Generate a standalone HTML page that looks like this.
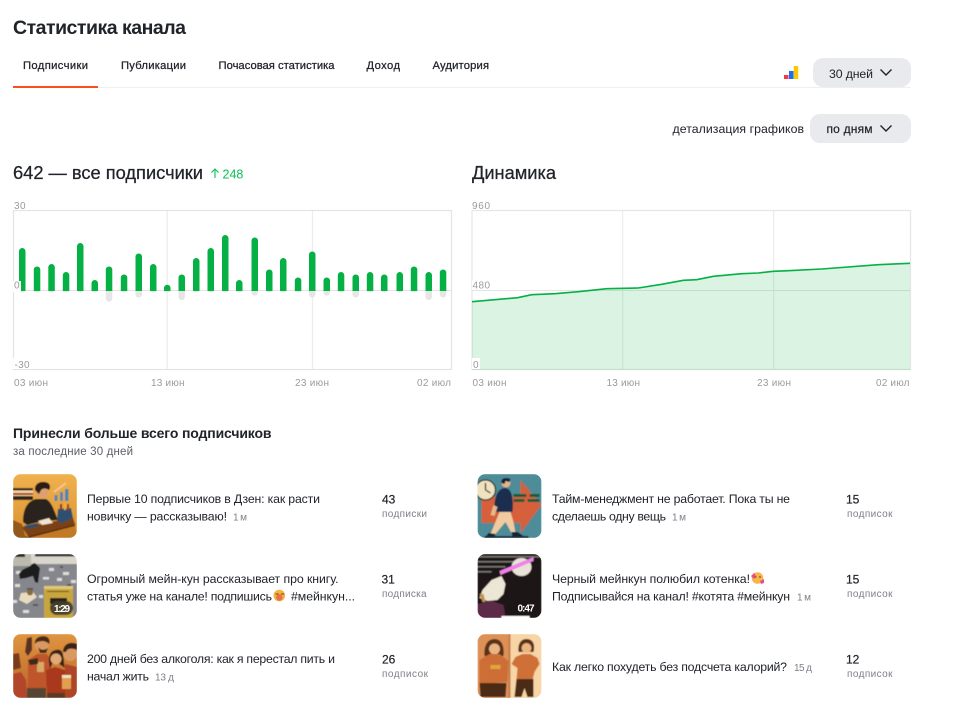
<!DOCTYPE html>
<html lang="ru">
<head>
<meta charset="utf-8">
<title>Статистика канала</title>
<style>
html,body{margin:0;padding:0;background:#fff;width:957px;height:716px;overflow:hidden}
svg{display:block;font-family:"Liberation Sans","Noto Sans CJK SC",sans-serif}
.d{fill:#20232a}
.g{fill:#9b9b9b;font-size:10px}
.s{fill:#7d8088;font-size:10px}
.m{stroke:#20232a;stroke-width:.25}
.t{font-size:12.3px;fill:#20232a}
.n{font-size:12px;fill:#20232a;stroke:#20232a;stroke-width:.2}
</style>
</head>
<body>
<svg width="957" height="716" viewBox="0 0 957 716" xmlns="http://www.w3.org/2000/svg">
<defs><clipPath id="c"><rect width="64" height="64" rx="8"/></clipPath>
<filter id="b" x="-5%" y="-5%" width="110%" height="110%"><feGaussianBlur stdDeviation=".4"/></filter>
<linearGradient id="o1" x1="0" y1="0" x2="0" y2="1"><stop offset="0" stop-color="#f0b14e"/><stop offset="1" stop-color="#d9922e"/></linearGradient>
<linearGradient id="o3" x1="0" y1="0" x2="0" y2="1"><stop offset="0" stop-color="#e0953f"/><stop offset="1" stop-color="#b8642a"/></linearGradient>
</defs>

<text class="d" x="13" y="34" font-size="19.500" font-weight="700" textLength="173">Статистика канала</text>

<g font-size="11.200" class="d">
<text class="d m" x="23" y="69" textLength="65">Подписчики</text>
<text class="d m" x="121" y="69" textLength="65">Публикации</text>
<text class="d m" x="218.500" y="69" textLength="116">Почасовая статистика</text>
<text class="d m" x="366.500" y="69" textLength="33.500">Доход</text>
<text class="d m" x="432.500" y="69" textLength="56.500">Аудитория</text>
</g>
<rect x="13" y="87" width="898" height="1" fill="#efefef"/>
<rect x="13" y="86" width="85" height="2" fill="#fc4d1c"/>

<rect x="784" y="75" width="4.500" height="4" fill="#f33b45"/>
<rect x="789" y="71" width="4.500" height="8" fill="#1e6ff0"/>
<rect x="793.700" y="66" width="4.500" height="13" fill="#fdc800"/>

<rect x="813" y="58" width="98" height="29" rx="10" fill="#e9eaee"/>
<text class="t" x="829" y="78" textLength="44">30 дней</text>
<path d="M880.500 69.500l5.500 5.500 5.500-5.500" fill="none" stroke="#20232a" stroke-width="1.400"/>

<text class="t" x="672.500" y="133" textLength="131.500">детализация графиков</text>
<rect x="810" y="114" width="101" height="29" rx="10" fill="#e9eaee"/>
<text class="n" x="826.500" y="133" textLength="46">по дням</text>
<path d="M880.500 125.500l5.500 5.500 5.500-5.500" fill="none" stroke="#20232a" stroke-width="1.400"/>

<text class="d m" x="13" y="179" font-size="18.300" textLength="190">642 — все подписчики</text>
<path d="M215 178v-9M211.500 172.500l3.500-3.500 3.500 3.500" fill="none" stroke="#0bbf54" stroke-width="1.100"/>
<text x="222.500" y="178.500" font-size="12.500" fill="#0bbf54">248</text>
<text class="d m" x="472" y="179" font-size="18.300" textLength="84">Динамика</text>

<!-- left chart -->
<g>
<rect x="13.500" y="210.500" width="438" height="159" fill="#fff" stroke="#e4e4e4" stroke-width="1.200"/>
<rect x="166.500" y="211" width="1.300" height="158" fill="#ededed"/>
<rect x="311.800" y="211" width="1.300" height="158" fill="#ededed"/>
<g fill="#e6e6e6">
<rect x="19" y="286" width="6.500" height="6.500" rx="3"/><rect x="33.800" y="286" width="6.500" height="6.500" rx="3"/><rect x="48.300" y="286" width="6.500" height="6.500" rx="3"/><rect x="62.800" y="286" width="6.500" height="6.500" rx="3"/><rect x="77" y="286" width="6.500" height="6.500" rx="3"/><rect x="91.500" y="286" width="6.500" height="6.500" rx="3"/>
<rect x="105.800" y="286" width="6.500" height="15.700" rx="3.200"/>
<rect x="120.800" y="286" width="6.500" height="6.500" rx="3"/>
<rect x="135.500" y="286" width="6.500" height="11.500" rx="3.200"/>
<rect x="150" y="286" width="6.500" height="6.500" rx="3"/><rect x="164" y="286" width="6.500" height="6.500" rx="3"/>
<rect x="178.500" y="286" width="6.500" height="14" rx="3.200"/>
<rect x="193" y="286" width="6.500" height="6.500" rx="3"/><rect x="207.500" y="286" width="6.500" height="6.500" rx="3"/><rect x="222" y="286" width="6.500" height="6.500" rx="3"/><rect x="236" y="286" width="6.500" height="6.500" rx="3"/>
<rect x="251.500" y="286" width="6.500" height="9.700" rx="3.200"/>
<rect x="266" y="286" width="6.500" height="6.500" rx="3"/><rect x="280" y="286" width="6.500" height="6.500" rx="3"/><rect x="294.800" y="286" width="6.500" height="6.500" rx="3"/>
<rect x="309" y="286" width="6.500" height="11.500" rx="3.200"/>
<rect x="323.500" y="286" width="6.500" height="9.700" rx="3.200"/>
<rect x="337.800" y="286" width="6.500" height="6.500" rx="3"/>
<rect x="352.500" y="286" width="6.500" height="11.500" rx="3.200"/>
<rect x="366.800" y="286" width="6.500" height="6.500" rx="3"/><rect x="381" y="286" width="6.500" height="6.500" rx="3"/><rect x="396.500" y="286" width="6.500" height="6.500" rx="3"/><rect x="410.800" y="286" width="6.500" height="6.500" rx="3"/>
<rect x="425.500" y="286" width="6.500" height="14" rx="3.200"/>
<rect x="439.800" y="286" width="6.500" height="11.500" rx="3.200"/>
</g>
<rect x="14" y="290" width="437" height="1" fill="#e4e4e4"/>
<g fill="#05b044">
<path d="M19 291v-39.700a3.250 3.250 0 0 1 6.500 0V291z"/>
<path d="M33.800 291v-21.300a3.250 3.250 0 0 1 6.500 0V291z"/>
<path d="M48.300 291v-23.700a3.250 3.250 0 0 1 6.500 0V291z"/>
<path d="M62.800 291v-15.700a3.250 3.250 0 0 1 6.500 0V291z"/>
<path d="M77 291v-44.700a3.250 3.250 0 0 1 6.500 0V291z"/>
<path d="M91.500 291v-7.700a3.250 3.250 0 0 1 6.500 0V291z"/>
<path d="M105.800 291v-21.300a3.250 3.250 0 0 1 6.500 0V291z"/>
<path d="M120.800 291v-13.300a3.250 3.250 0 0 1 6.500 0V291z"/>
<path d="M135.500 291v-34.300a3.250 3.250 0 0 1 6.500 0V291z"/>
<path d="M150 291v-23.700a3.250 3.250 0 0 1 6.500 0V291z"/>
<path d="M164 291v-3a3.250 3.250 0 0 1 6.500 0V291z"/>
<path d="M178.500 291v-13.300a3.250 3.250 0 0 1 6.500 0V291z"/>
<path d="M193 291v-29.700a3.250 3.250 0 0 1 6.500 0V291z"/>
<path d="M207.500 291v-39.700a3.250 3.250 0 0 1 6.500 0V291z"/>
<path d="M222 291v-52.700a3.250 3.250 0 0 1 6.500 0V291z"/>
<path d="M236 291v-7.700a3.250 3.250 0 0 1 6.500 0V291z"/>
<path d="M251.500 291v-50.300a3.250 3.250 0 0 1 6.500 0V291z"/>
<path d="M266 291v-18.300a3.250 3.250 0 0 1 6.500 0V291z"/>
<path d="M280 291v-29.700a3.250 3.250 0 0 1 6.500 0V291z"/>
<path d="M294.800 291v-10.300a3.250 3.250 0 0 1 6.500 0V291z"/>
<path d="M309 291v-36.300a3.250 3.250 0 0 1 6.500 0V291z"/>
<path d="M323.500 291v-10.300a3.250 3.250 0 0 1 6.500 0V291z"/>
<path d="M337.800 291v-15.700a3.250 3.250 0 0 1 6.500 0V291z"/>
<path d="M352.500 291v-13.300a3.250 3.250 0 0 1 6.500 0V291z"/>
<path d="M366.800 291v-15.700a3.250 3.250 0 0 1 6.500 0V291z"/>
<path d="M381 291v-13.300a3.250 3.250 0 0 1 6.500 0V291z"/>
<path d="M396.500 291v-15.700a3.250 3.250 0 0 1 6.500 0V291z"/>
<path d="M410.800 291v-21.300a3.250 3.250 0 0 1 6.500 0V291z"/>
<path d="M425.500 291v-15.700a3.250 3.250 0 0 1 6.500 0V291z"/>
<path d="M439.800 291v-18.300a3.250 3.250 0 0 1 6.500 0V291z"/>
</g>
<rect x="13" y="200" width="14" height="10" fill="#fff"/>
<rect x="13" y="281" width="8" height="11" fill="#fff"/>
<rect x="13" y="358" width="18" height="11" fill="#fff"/>
<text class="g" x="14" y="209" textLength="11.500">30</text>
<text class="g" x="14" y="288.500" textLength="6">0</text>
<text class="g" x="14.500" y="368" textLength="15">-30</text>
<text class="g" x="14" y="386" textLength="34">03 июн</text>
<text class="g" x="151" y="386" textLength="33.500">13 июн</text>
<text class="g" x="295" y="386" textLength="34">23 июн</text>
<text class="g" x="417" y="386" textLength="34">02 июл</text>
</g>

<!-- right chart -->
<g>
<rect x="472" y="210.500" width="438.500" height="159" fill="#fff" stroke="#e6e6e6" stroke-width="1.200"/>
<rect x="622" y="211" width="1.300" height="158" fill="#ededed"/>
<rect x="773" y="211" width="1.300" height="158" fill="#ededed"/>
<rect x="472" y="290" width="438" height="1" fill="#e4e4e4"/>
<path d="M472 301.700L517.700 297.700L531.700 294.700L555 293.700L578.300 291.700L606.700 288.700L638.300 288L661.700 284.300L683.300 280.300L696.700 279.700L713.300 276.300L741.700 273.700L758.300 273L773.300 271.300L788.300 270.700L821.700 269L878.300 264.700L910 263.300V370H472Z" fill="#05b044" fill-opacity=".15"/>
<path d="M472 301.700L517.700 297.700L531.700 294.700L555 293.700L578.300 291.700L606.700 288.700L638.300 288L661.700 284.300L683.300 280.300L696.700 279.700L713.300 276.300L741.700 273.700L758.300 273L773.300 271.300L788.300 270.700L821.700 269L878.300 264.700L910 263.300" fill="none" stroke="#05b044" stroke-width="1.600"/>
<rect x="472" y="200" width="19" height="10" fill="#fff"/>
<rect x="472" y="280" width="19" height="10" fill="#fff"/>
<rect x="472" y="358" width="8" height="11" fill="#fff"/>
<text class="g" x="472" y="209" textLength="18">960</text>
<text class="g" x="472.500" y="288.500" textLength="17.500">480</text>
<text class="g" x="473" y="368" textLength="5.500">0</text>
<text class="g" x="472.500" y="386" textLength="34">03 июн</text>
<text class="g" x="606.500" y="386" textLength="33.500">13 июн</text>
<text class="g" x="757" y="386" textLength="34">23 июн</text>
<text class="g" x="876" y="386" textLength="33.500">02 июл</text>
</g>

<text class="d" x="13" y="438" font-size="14" font-weight="700" textLength="258.500">Принесли больше всего подписчиков</text>
<text x="13" y="455" font-size="11.500" fill="#5b5e66" textLength="120">за последние 30 дней</text>

<!-- thumb 1 -->
<g transform="translate(13 474)" clip-path="url(#c)" filter="url(#b)">
<rect width="64" height="64" fill="url(#o1)"/>
<path d="M0 54L16 64H0Z" fill="#6a3c16"/>
<path d="M0 46L9 50L13 64H0Z" fill="#93591c"/>
<path d="M18 64L62 52L64 64Z" fill="#c27a26"/>
<rect x="41.500" y="21" width="3" height="6" fill="#4c86b4"/><rect x="47" y="18" width="3" height="9" fill="#4c86b4"/><rect x="52" y="15" width="3.500" height="12" fill="#4c86b4"/>
<path d="M41 18L53 9" stroke="#f6e3b8" stroke-width="1" fill="none"/>
<path d="M10 48C10 34 15 27 23 25L33 25C39 28 41 37 45 46L30 47L14 51Z" fill="#2a241f"/>
<circle cx="29" cy="18" r="6.500" fill="#dfa070"/>
<path d="M22 16C21 9 29 6 35 9C38 11 37 15 36 16C33 14 30 14 28 16L26 20Z" fill="#2c1c12"/>
<path d="M9 53L60 44L62 50L15 62Z" fill="#7c4015"/>
<path d="M10 55L15 62L62 50L62 52L16 64Z" fill="#5d3010"/>
<path d="M25 47L36 44L40 49L29 51Z" fill="#f0e6cf"/>
<path d="M11 52L25 49L26 52L14 55Z" fill="#2f4e6b"/>
<path d="M45 35L58 34L60 44L49 49L44 47Z" fill="#2d4f6e"/>
<rect x="47" y="30" width="2" height="6" fill="#8a2c1c"/><rect x="51" y="29" width="2" height="7" fill="#e4b23c"/><rect x="54" y="30" width="2" height="6" fill="#a63a1e"/>
<rect x="0" y="14" width="20" height="12" fill="#efd6a2"/>
<rect x="0" y="14" width="20" height="2.500" fill="#3a2a1a"/><rect x="0" y="19" width="20" height="2" fill="#a93a1e"/><rect x="0" y="22" width="20" height="4" fill="#33261a"/>
</g>

<!-- thumb 2 -->
<g transform="translate(13 554)" clip-path="url(#c)" filter="url(#b)">
<rect width="64" height="64" fill="#86868d"/>
<rect width="64" height="10" fill="#d9d6cc"/>
<rect x="0" y="0" width="18" height="12" fill="#bdb9ac"/>
<rect x="22" y="0" width="42" height="2.500" fill="#3a3838"/>
<rect x="0" y="0" width="12" height="3" fill="#2e2c2c"/>
<g fill="#dcdcdc"><rect x="3" y="17" width="6" height="3"/><rect x="36" y="14" width="5" height="3"/><rect x="50" y="18" width="6" height="3"/><rect x="58" y="26" width="5" height="3"/><rect x="30" y="23" width="6" height="2.500"/><rect x="2" y="30" width="5" height="3"/><rect x="44" y="24" width="5" height="3"/><rect x="26" y="41" width="4" height="3"/><rect x="10" y="56" width="6" height="3"/><rect x="0" y="46" width="4" height="3"/></g>
<g fill="#55555b"><rect x="14" y="34" width="6" height="2"/><rect x="20" y="50" width="5" height="2"/><rect x="8" y="45" width="3" height="2"/><rect x="47" y="12" width="3" height="2"/><rect x="54" y="30" width="4" height="2"/></g>
<path d="M8 39L20 38L24 43L14 50L6 46Z" fill="#e8dcc0"/>
<circle cx="17" cy="38.500" r="3" fill="#8b6b3a"/>
<path d="M6 20C10 13 17 14 19 10L22 9L27 14L26 21L25 29L22 28L20 22L13 24L7 25Z" fill="#1f1d1f"/>
<rect x="31" y="32" width="29" height="32" fill="#c9a53e"/>
<rect x="31" y="32" width="29" height="3" fill="#e0c877"/>
<rect x="34" y="37" width="22" height="1" fill="#5a4a20"/>
<rect x="37" y="44" width="17" height="6" fill="#27231a"/>
<rect x="37" y="47" width="23" height="14" rx="7" fill="#3f3b2c" fill-opacity=".9"/>
</g>
<text x="54" y="612" font-size="10" font-weight="700" fill="#fff" textLength="16">1:29</text>

<!-- thumb 3 -->
<g transform="translate(13 634)" clip-path="url(#c)" filter="url(#b)">
<rect width="64" height="64" fill="url(#o3)"/>
<path d="M0 40L8 38L13 46L14 64H0Z" fill="#b2452a"/>
<path d="M0 20L6 19L8 34L0 36Z" fill="#7a3a1c"/>
<path d="M12 18L14 4L19 3L19 16L15 22Z" fill="#5a3220"/>
<path d="M15 26L24 20L34 20L38 27L33 55L15 55Z" fill="#bf552a"/>
<rect x="14" y="54" width="19" height="10" fill="#574532"/>
<circle cx="29" cy="11" r="7" fill="#d99a62"/>
<path d="M22 10C21 3 29 1 34 3C37 5 37 8 36 10C32 6 28 7 24 8Z" fill="#4c2a18"/>
<path d="M25 13C28 17 32 16 35 14L33 19L27 19Z" fill="#4c2a18"/>
<rect x="24" y="28" width="7" height="10" fill="#d8a868"/>
<path d="M15 26L25 24L25 30L17 31Z" fill="#3a2a1e"/>
<path d="M33 36L42 33L52 36L52 60H34Z" fill="#a9381f"/>
<rect x="34" y="59" width="18" height="5" fill="#5a3a24"/>
<path d="M36 28C35 17 42 15 47 16C52 19 50 28 52 34L45 29L39 30L37 35Z" fill="#3b2016"/>
<circle cx="43" cy="25" r="5.500" fill="#e2a977"/>
<path d="M52 30L64 33V64H52Z" fill="#ad4426"/>
<circle cx="57" cy="20" r="7" fill="#d99a62"/>
<path d="M50 18C50 10 57 7 64 10V16C60 14 54 14 53 18Z" fill="#3b2016"/>
<rect x="49" y="41" width="9" height="14" fill="#e0a050"/><rect x="49" y="41" width="9" height="3" fill="#f4e2bc"/>
</g>

<!-- thumb 4 -->
<g transform="translate(477.500 474)" clip-path="url(#c)" filter="url(#b)">
<rect width="64" height="64" fill="#4e8c98"/>
<path d="M4 23H43V6L64 31L43 59V49H4Z" fill="#d5613a"/>
<g fill="#1f5a3a"><rect x="36" y="20" width="13" height="3"/><rect x="52" y="20" width="10" height="3"/><rect x="36" y="25" width="11" height="3"/><rect x="50" y="25" width="12" height="3"/></g>
<circle cx="8" cy="16" r="10" fill="#f1e2bf" stroke="#2b2a2a" stroke-width="1.300"/>
<path d="M8 16V9M8 16L13 19" stroke="#2b2a2a" stroke-width="1.300" fill="none"/>
<path d="M17 38C16 26 19 15 27 14C35 14 36 26 35 38Z" fill="#1b2f4d"/>
<path d="M16 31L13 41L17 42L20 33Z" fill="#e8b88a"/>
<path d="M22 38H33L36 48L38 59H34L28 48L18 60H13Z" fill="#f0cba0"/>
<path d="M11 59L18 60L17 63L8 63Z" fill="#182436"/><path d="M34 58L40 58L46 62L35 63Z" fill="#182436"/>
<circle cx="28.500" cy="9" r="4.500" fill="#e4b48a"/>
<path d="M24 9C23 4 28 3 33 5L32 8L28 7L27 10Z" fill="#15233a"/>
<rect x="7" y="62" width="44" height="2" fill="#16303c"/>
</g>

<!-- thumb 5 -->
<g transform="translate(477.500 554)" clip-path="url(#c)" filter="url(#b)">
<rect width="64" height="64" fill="#1b1718"/>
<g fill="#77746f"><rect width="64" height="1.500" y="2"/><rect width="38" height="1.500" y="7"/><rect width="28" height="1.500" y="12"/><rect width="14" height="1.500" y="17"/></g>
<ellipse cx="44" cy="13" rx="10" ry="9" fill="#e9e2d8"/>
<path d="M14 26L24 22L28 30L26 40L20 46L10 47L2 44L5 36Z" fill="#ece6d6"/>
<path d="M0 50L14 47L26 51L28 64H0Z" fill="#5b2c47"/>
<path d="M2 40L5 48L8 48L6 40Z" fill="#c49048"/>
<path d="M22 17L56 3L56 7L23 21Z" fill="#ee82e6"/>
<rect x="24" y="62" width="28" height="2" fill="#fff"/>
</g>
<text x="517.500" y="611.500" font-size="10" font-weight="700" fill="#fff" textLength="17">0:47</text>

<!-- thumb 6 -->
<g transform="translate(477.500 634)" clip-path="url(#c)" filter="url(#b)">
<rect width="64" height="64" fill="#f7d5a6"/>
<rect width="32" height="64" fill="#dd9157"/>
<rect x="31" width="2" height="64" fill="#c77c46"/>
<path d="M7 22C6 12 10 5 17 5C24 5 27 12 26 22Z" fill="#5c3218"/>
<circle cx="17" cy="15" r="5.500" fill="#eab583"/>
<path d="M2 26L12 20H22L31 27L30 48L2 50Z" fill="#cc6e34"/>
<path d="M2 49H29L28 63H3Z" fill="#4b2a18"/>
<rect x="13" y="31" width="10" height="4" fill="#e0a63c"/>
<path d="M41 18C40 9 44 5 49 5C55 5 58 10 56 18Z" fill="#5c3218"/>
<circle cx="49" cy="14" r="5" fill="#eab583"/>
<path d="M38 23L45 20H53L60 24L62 30L57 38L55 46H39L40 34L34 30Z" fill="#cf7037"/>
<path d="M39 45H56L56 63H50L47 54L44 63H37Z" fill="#4b2a18"/>
</g>

<!-- left rows -->
<text class="t" x="87" y="503" textLength="233">Первые 10 подписчиков в Дзен: как расти</text>
<text class="t" x="87" y="520.500" textLength="140">новичку — рассказываю!</text>
<text class="s" x="233" y="520.500" textLength="14">1 м</text>
<text class="n" x="382" y="503.500">43</text>
<text class="s" x="382" y="517" textLength="45">подписки</text>

<text class="t" x="87" y="583" textLength="251.500">Огромный мейн-кун рассказывает про книгу.</text>
<text class="t" x="87" y="600.500" textLength="185">статья уже на канале! подпишись</text>
<circle cx="279.300" cy="595.500" r="5.800" fill="#f5b43f"/>
<circle cx="279.300" cy="597.500" r="3.200" fill="#e8704a"/>
<path d="M275.500 594h3M281 594h3" stroke="#6a4020" stroke-width="1"/>
<text class="t" x="291" y="600.500" textLength="64">#мейнкун...</text>
<text class="n" x="381.500" y="583.500">31</text>
<text class="s" x="382" y="597" textLength="44.500">подписка</text>

<text class="t" x="87" y="663" textLength="248">200 дней без алкоголя: как я перестал пить и</text>
<text class="t" x="87" y="680.500" textLength="62">начал жить</text>
<text class="s" x="155" y="680.500" textLength="19">13 д</text>
<text class="n" x="382" y="663.500">26</text>
<text class="s" x="382" y="677" textLength="46">подписок</text>

<!-- right rows -->
<text class="t" x="552" y="503" textLength="238">Тайм-менеджмент не работает. Пока ты не</text>
<text class="t" x="552" y="520.500" textLength="114">сделаешь одну вещь</text>
<text class="s" x="672" y="520.500" textLength="14">1 м</text>
<text class="n" x="846" y="503.500">15</text>
<text class="s" x="847" y="517" textLength="45.500">подписок</text>

<text class="t" x="552" y="583" textLength="198">Черный мейнкун полюбил котенка!</text>
<circle cx="757.500" cy="578" r="5.800" fill="#f7b64a"/>
<path d="M751 576l3-3 2 3-2 3zM760 581l4-2 0 4-3 1z" fill="#ea4f8c"/>
<path d="M754.500 577h2M759 577h2" stroke="#6a4020" stroke-width="1"/>
<text class="t" x="552" y="600.500" textLength="238">Подписывайся на канал! #котята #мейнкун</text>
<text class="s" x="797" y="600.500" textLength="14">1 м</text>
<text class="n" x="846" y="583.500">15</text>
<text class="s" x="847" y="597" textLength="45.500">подписок</text>

<text class="t" x="552" y="671" textLength="235">Как легко похудеть без подсчета калорий?</text>
<text class="s" x="794" y="671" textLength="18">15 д</text>
<text class="n" x="846" y="663.500">12</text>
<text class="s" x="847" y="677" textLength="45.500">подписок</text>
</svg>
</body>
</html>
